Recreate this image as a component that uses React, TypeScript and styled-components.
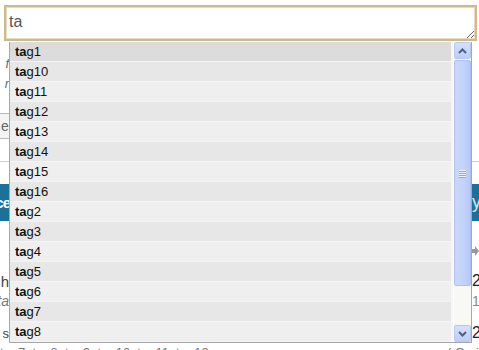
import React from 'react'
import styled, { createGlobalStyle } from 'styled-components'

const GlobalStyle = createGlobalStyle`
  html, body {
    margin: 0;
    padding: 0;
    background: #ffffff;
    overflow: hidden;
  }
  body {
    font-family: "Liberation Sans", Arial, sans-serif;
  }
`

const tags = ['tag1', 'tag10', 'tag11', 'tag12', 'tag13', 'tag14', 'tag15', 'tag16', 'tag2', 'tag3', 'tag4', 'tag5', 'tag6', 'tag7', 'tag8']
const query = 'ta'

const Page = styled.div`
  position: relative;
  width: 479px;
  height: 350px;
  overflow: hidden;
  background: #fff;
`

const TagInput = styled.textarea`
  display: block;
  box-sizing: border-box;
  margin: 5px 0 0 4px;
  width: 473px;
  height: 36px;
  padding: 6px 3px;
  border: 2px solid #cdb98c;
  box-shadow: inset 0 0 0 1px #e6dcc2;
  outline: none;
  resize: both;
  font-family: "Liberation Sans", Arial, sans-serif;
  font-size: 16px;
  color: #555;
  background: #fff;
`

// ---- the page that lies under the suggestion list ----

const Backdrop = styled.div`
  display: flex;
  flex-direction: column;
`

const Strip = styled.div<{ $h: number; $mt: number }>`
  display: flex;
  justify-content: space-between;
  align-items: center;
  height: ${p => p.$h}px;
  margin-top: ${p => p.$mt}px;
`

const LeftEdge = styled.div<{ $size?: number; $italic?: boolean; $color?: string; $bold?: boolean }>`
  display: flex;
  justify-content: flex-end;
  width: 9px;
  overflow: hidden;
  white-space: nowrap;
  font-size: ${p => p.$size ?? 13}px;
  font-style: ${p => (p.$italic ? 'italic' : 'normal')};
  font-weight: ${p => (p.$bold ? 700 : 400)};
  color: ${p => p.$color ?? '#555'};
`

const RightEdge = styled.div<{ $size?: number; $color?: string }>`
  width: 7px;
  overflow: hidden;
  white-space: nowrap;
  font-size: ${p => p.$size ?? 13}px;
  color: ${p => p.$color ?? '#333'};
`

const FieldBox = styled.div`
  box-sizing: border-box;
  width: 60px;
  height: 26px;
  margin-top: 22px;
  margin-left: -4px;
  padding-left: 4px;
  border: 1px solid #b8b8b8;
  background: #f4f4f4;
  display: flex;
  align-items: center;
  font-size: 14px;
  color: #666;
`

const Rule = styled.div`
  height: 1px;
  margin-top: 22px;
  background: #cfcfcf;
`

const Band = styled.div`
  display: flex;
  justify-content: space-between;
  align-items: center;
  height: 37px;
  margin-top: 22px;
  background: #1b7198;
`

const BandTitle = styled(LeftEdge)`
  width: 10px;
  letter-spacing: -1px;
`

const BottomLine = styled.div`
  display: flex;
  justify-content: space-between;
  margin-top: 4px;
  font-size: 13px;
  color: #777;
  white-space: nowrap;
  line-height: 16px;
  span:last-child {
    width: 32px;
    overflow: hidden;
  }
`

// ---- the suggestion list ----

const Suggest = styled.div`
  position: absolute;
  top: 42px;
  left: 9px;
  width: 463px;
  height: 301px;
  box-sizing: border-box;
  display: flex;
  gap: 2px;
  border: 1px solid #a7a7a7;
  border-top: none;
  background: #f6f6f6;
`

const List = styled.ul`
  flex: 1;
  margin: 0;
  padding: 0;
  list-style: none;
  overflow: hidden;
`

const Item = styled.li<{ $tone: 'active' | 'dark' | 'light' }>`
  box-sizing: border-box;
  height: 20px;
  line-height: 20px;
  padding-left: 5px;
  font-size: 13px;
  color: #111;
  border-bottom: 1px solid #f4f4f4;
  background: ${p => (p.$tone === 'active' ? '#dcdcdc' : p.$tone === 'dark' ? '#e7e7e7' : '#efefef')};
  b {
    font-weight: 700;
  }
`

const Scrollbar = styled.div`
  width: 17px;
  display: flex;
  flex-direction: column;
  background: #f8f8f4;
  border-left: 1px solid #fdfdfd;
`

const ArrowButton = styled.div`
  box-sizing: border-box;
  height: 17px;
  display: flex;
  align-items: center;
  justify-content: center;
  border: 1px solid #b7c8f1;
  border-radius: 2px;
  background: linear-gradient(180deg, #d5e0fd 0%, #bccdf9 100%);
`

const Thumb = styled.div`
  box-sizing: border-box;
  height: 226px;
  margin-top: 1px;
  display: flex;
  align-items: center;
  justify-content: center;
  border: 1px solid #aec1ee;
  border-radius: 2px;
  background: linear-gradient(90deg, #cbd8fd 0%, #c2d2fc 60%, #b6c8f6 100%);
`

const Track = styled.div`
  flex: 1;
`

const Grip = styled.div`
  display: flex;
  flex-direction: column;
  gap: 1px;
  span {
    display: block;
    width: 7px;
    height: 1px;
    background: #eef3ff;
    box-shadow: 0 1px 0 #8fa7dc;
  }
`

const Chevron: React.FC<{ up?: boolean }> = ({ up }) => (
  <svg width="9" height="6" viewBox="0 0 9 6">
    <path
      d={up ? 'M1 5 L4.5 1.5 L8 5' : 'M1 1 L4.5 4.5 L8 1'}
      fill="none"
      stroke="#4d6185"
      strokeWidth="2"
    />
  </svg>
)

export default function App() {
  return (
    <>
      <GlobalStyle />
      <Page>
        <TagInput defaultValue={query} />

        <Backdrop>
          <Strip $h={16} $mt={14}>
            <LeftEdge $italic $color="#666">f</LeftEdge>
            <RightEdge />
          </Strip>
          <Strip $h={16} $mt={4}>
            <LeftEdge $italic $color="#666">r</LeftEdge>
            <RightEdge />
          </Strip>
          <FieldBox>e</FieldBox>
          <Rule />
          <Band>
            <BandTitle $size={15} $bold $color="#fff">ce</BandTitle>
            <RightEdge $size={18} $color="#d5e8f0">y</RightEdge>
          </Band>
          <Strip $h={16} $mt={22}>
            <LeftEdge />
            <RightEdge>
              <svg width="7" height="10" viewBox="0 0 7 10">
                <path d="M0 3 H3 V0 L7 5 L3 10 V7 H0 Z" fill="#9a9a9a" />
              </svg>
            </RightEdge>
          </Strip>
          <Strip $h={20} $mt={12}>
            <LeftEdge $size={15} $color="#444">gh</LeftEdge>
            <RightEdge $size={16} $color="#222">2</RightEdge>
          </Strip>
          <Strip $h={16} $mt={2}>
            <LeftEdge $size={14} $italic $color="#777">ta</LeftEdge>
            <RightEdge $size={14} $color="#888">1</RightEdge>
          </Strip>
          <Strip $h={16} $mt={16}>
            <LeftEdge $size={13} $color="#444">s</LeftEdge>
            <RightEdge $size={16} $color="#222">2</RightEdge>
          </Strip>
          <BottomLine>
            <span>tag7, tag8, tag9, tag10, tag11, tag12</span>
            <span>( Omit</span>
          </BottomLine>
        </Backdrop>

        <Suggest>
          <List>
            {tags.map((tag, i) => (
              <Item key={tag} $tone={i === 0 ? 'active' : i % 2 === 1 ? 'dark' : 'light'}>
                <b>{tag.slice(0, query.length)}</b>
                {tag.slice(query.length)}
              </Item>
            ))}
          </List>
          <Scrollbar>
            <ArrowButton>
              <Chevron up />
            </ArrowButton>
            <Thumb>
              <Grip>
                <span />
                <span />
                <span />
                <span />
              </Grip>
            </Thumb>
            <Track />
            <ArrowButton>
              <Chevron />
            </ArrowButton>
          </Scrollbar>
        </Suggest>
      </Page>
    </>
  )
}
